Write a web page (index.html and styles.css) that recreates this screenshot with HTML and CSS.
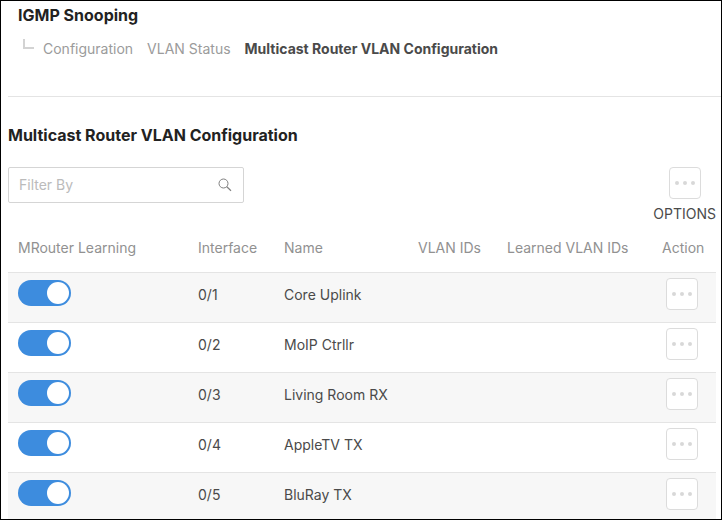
FILE: index.html
```html
<!DOCTYPE html>
<html lang="en">
  <head>
    <meta charset="UTF-8" />
    <meta name="viewport" content="width=device-width, initial-scale=1.0" />
    <title>IGMP Snooping</title>
    <link rel="stylesheet" href="styles.css">
  </head>
  <body>
    <div class="page">
      <!-- header -->
      <header class="page-header">
        <h1 class="page-title">IGMP Snooping</h1>
        <nav class="tabs">
          <span class="tabs-branch"></span>
          <a href="#configuration" class="tab">Configuration</a>
          <a href="#vlan-status" class="tab">VLAN Status</a>
          <a href="#mrouter" class="tab tab-active">Multicast Router VLAN Configuration</a>
        </nav>
      </header>

      <!-- table section -->
      <main class="content">
        <h2 class="section-title">Multicast Router VLAN Configuration</h2>
        <div class="toolbar">
          <div class="filter">
            <input type="text" class="filter-input" placeholder="Filter By" aria-label="Filter By" />
            <svg class="filter-icon" viewBox="0 0 14 14" fill="none" stroke="#808080">
              <circle cx="5.5" cy="5.5" r="4.5" />
              <path d="M8.8 8.8L13 12.8" stroke-width="1.2" />
            </svg>
          </div>
          <div class="options">
            <button type="button" class="more-btn" aria-labelledby="options-label">
              <svg viewBox="0 0 20 4"><circle cx="2" cy="2" r="2" /><circle cx="10" cy="2" r="2" /><circle cx="18" cy="2" r="2" /></svg>
            </button>
            <span id="options-label" class="options-label">OPTIONS</span>
          </div>
        </div>

        <table class="vlan-table">
          <thead>
            <tr>
              <th class="col-learning">MRouter Learning</th>
              <th class="col-interface">Interface</th>
              <th class="col-name">Name</th>
              <th class="col-vlan">VLAN IDs</th>
              <th class="col-learned">Learned VLAN IDs</th>
              <th class="col-action">Action</th>
            </tr>
          </thead>
          <tbody>
            <tr>
              <td class="col-learning"><input type="checkbox" class="toggle" aria-label="MRouter Learning 0/1" checked /></td>
              <td>0/1</td>
              <td>Core Uplink</td>
              <td></td>
              <td></td>
              <td class="col-action">
                <button type="button" class="more-btn" aria-label="Actions 0/1">
                  <svg viewBox="0 0 20 4"><circle cx="2" cy="2" r="2" /><circle cx="10" cy="2" r="2" /><circle cx="18" cy="2" r="2" /></svg>
                </button>
              </td>
            </tr>
            <tr>
              <td class="col-learning"><input type="checkbox" class="toggle" aria-label="MRouter Learning 0/2" checked /></td>
              <td>0/2</td>
              <td>MoIP Ctrllr</td>
              <td></td>
              <td></td>
              <td class="col-action">
                <button type="button" class="more-btn" aria-label="Actions 0/2">
                  <svg viewBox="0 0 20 4"><circle cx="2" cy="2" r="2" /><circle cx="10" cy="2" r="2" /><circle cx="18" cy="2" r="2" /></svg>
                </button>
              </td>
            </tr>
            <tr>
              <td class="col-learning"><input type="checkbox" class="toggle" aria-label="MRouter Learning 0/3" checked /></td>
              <td>0/3</td>
              <td>Living Room RX</td>
              <td></td>
              <td></td>
              <td class="col-action">
                <button type="button" class="more-btn" aria-label="Actions 0/3">
                  <svg viewBox="0 0 20 4"><circle cx="2" cy="2" r="2" /><circle cx="10" cy="2" r="2" /><circle cx="18" cy="2" r="2" /></svg>
                </button>
              </td>
            </tr>
            <tr>
              <td class="col-learning"><input type="checkbox" class="toggle" aria-label="MRouter Learning 0/4" checked /></td>
              <td>0/4</td>
              <td>AppleTV TX</td>
              <td></td>
              <td></td>
              <td class="col-action">
                <button type="button" class="more-btn" aria-label="Actions 0/4">
                  <svg viewBox="0 0 20 4"><circle cx="2" cy="2" r="2" /><circle cx="10" cy="2" r="2" /><circle cx="18" cy="2" r="2" /></svg>
                </button>
              </td>
            </tr>
            <tr>
              <td class="col-learning"><input type="checkbox" class="toggle" aria-label="MRouter Learning 0/5" checked /></td>
              <td>0/5</td>
              <td>BluRay TX</td>
              <td></td>
              <td></td>
              <td class="col-action">
                <button type="button" class="more-btn" aria-label="Actions 0/5">
                  <svg viewBox="0 0 20 4"><circle cx="2" cy="2" r="2" /><circle cx="10" cy="2" r="2" /><circle cx="18" cy="2" r="2" /></svg>
                </button>
              </td>
            </tr>
          </tbody>
        </table>
      </main>
    </div>
  </body>
</html>
```
FILE: styles.css
```css
/*global*/
* {
  margin: 0;
  padding: 0;
  box-sizing: border-box;
}

body {
  font-family: Inter, "Liberation Sans", sans-serif;
  font-size: 14px;
  line-height: 20px;
  color: #4a4a4a;
  background-color: #fff;
}

.page {
  height: 100vh;
  padding-left: 7px;
  border: 1px solid #000;
  overflow: hidden;
}

/*header*/
.page-header {
  padding: 4px 10px 37px;
  border-bottom: 1px solid #e4e4e4;
}

.page-title,
.section-title {
  font-size: 16px;
  font-weight: 700;
  line-height: 20px;
  color: #222;
}

.tabs {
  display: flex;
  gap: 14px;
  margin-top: 14px;
}

.tabs-branch {
  width: 11px;
  height: 10px;
  margin: 0 -5px 0 5px;
  border-left: 2px solid #d3d3d3;
  border-bottom: 2px solid #d3d3d3;
}

.tab {
  color: #9b9b9b;
  text-decoration: none;
}

.tab-active {
  font-weight: 700;
  color: #4a4a4a;
}

/*content*/
.content {
  padding: 28px 5px 0 0;
}

.toolbar {
  display: flex;
  justify-content: space-between;
  align-items: flex-start;
  margin-top: 22px;
}

.filter {
  display: flex;
  align-items: center;
  width: 236px;
  height: 36px;
  padding: 0 11px 0 10px;
  border: 1px solid #d5d5d5;
  border-radius: 2px;
}

.filter-input {
  flex: 1;
  min-width: 0;
  height: 20px;
  border: none;
  outline: none;
  font: inherit;
  color: #4a4a4a;
}

.filter-input::placeholder {
  color: #bbb;
}

.filter-icon {
  width: 14px;
  height: 14px;
}

.options {
  display: flex;
  flex-direction: column;
  align-items: center;
  gap: 5px;
}

.more-btn {
  display: inline-flex;
  align-items: center;
  justify-content: center;
  width: 32px;
  height: 32px;
  border: 1px solid #dcdcdc;
  border-radius: 4px;
  background-color: #fff;
  vertical-align: top;
  cursor: pointer;
}

.more-btn svg {
  width: 20px;
  height: 4px;
  fill: #d8d8d8;
}

/*table*/
.vlan-table {
  width: 100%;
  margin-top: 14px;
  table-layout: fixed;
  border-collapse: separate;
  border-spacing: 0;
}

.vlan-table th {
  padding: 0 10px 14px;
  font-weight: 400;
  text-align: left;
  white-space: nowrap;
  color: #919191;
}

.vlan-table td {
  height: 50px;
  padding: 12px 10px 0;
  border-top: 1px solid #e4e4e4;
  vertical-align: top;
}

.vlan-table tbody tr:nth-of-type(odd) {
  background-color: #f7f7f7;
}

.vlan-table td.col-learning {
  padding-top: 7px;
}

.vlan-table .col-action {
  padding-right: 14px;
  text-align: center;
}

.vlan-table td.col-action {
  padding-top: 5px;
}

th.col-learning {
  width: 180px;
}

th.col-interface {
  width: 86px;
}

th.col-name {
  width: 134px;
}

th.col-vlan {
  width: 89px;
}

th.col-action {
  width: 64px;
}

/*toggle*/
.toggle {
  display: flex;
  align-items: center;
  justify-content: flex-end;
  width: 53px;
  height: 26px;
  padding: 2px;
  border-radius: 13px;
  background-color: #3d8cde;
  appearance: none;
  cursor: pointer;
}

.toggle::before {
  content: "";
  width: 22px;
  height: 22px;
  border-radius: 50%;
  background-color: #fff;
}

.toggle:not(:checked) {
  justify-content: flex-start;
  background-color: #ccc;
}
```
